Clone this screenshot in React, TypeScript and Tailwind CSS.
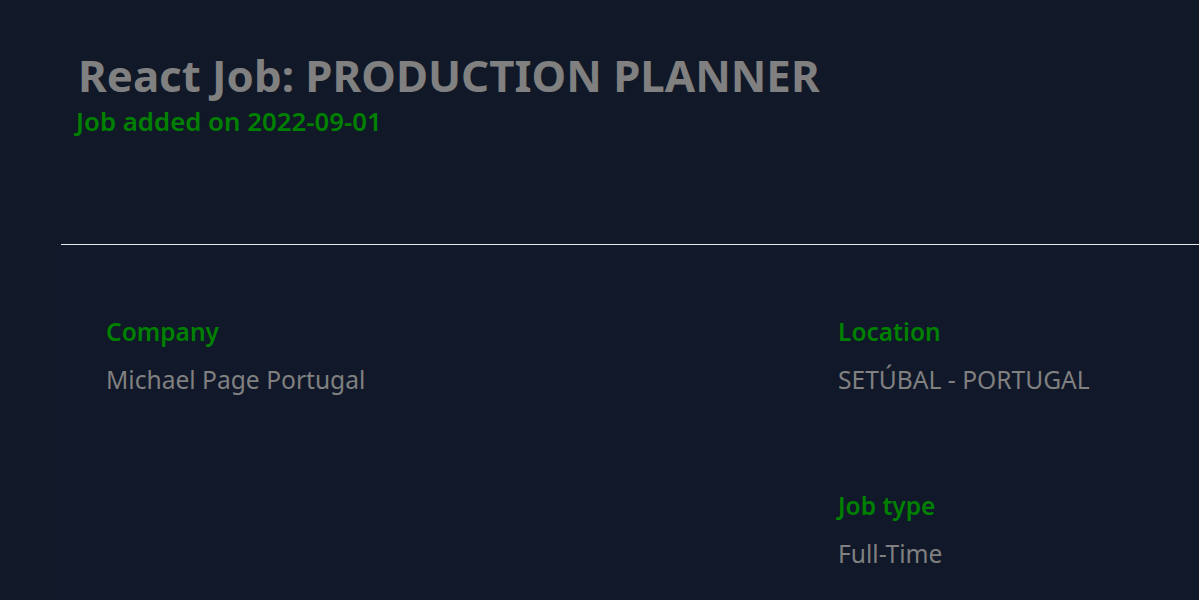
import React from 'react';

const job = {
  title: 'PRODUCTION PLANNER',
  added: '2022-09-01',
  company: 'Michael Page Portugal',
  location: 'SETÚBAL - PORTUGAL',
  type: 'Full-Time',
};

const Field: React.FC<{ label: string; value: string }> = ({ label, value }) => (
  <div className="flex flex-col">
    <h3 className="text-[24.5px] leading-[32px] font-semibold text-[#008000]">{label}</h3>
    <p className="mt-[16px] text-[24.6px] leading-[32px] text-[#808080]">{value}</p>
  </div>
);

export default function App() {
  return (
    <div
      className="min-h-[600px] bg-[#111827] pl-[61px] overflow-hidden"
      style={{ fontFamily: '"Noto Sans", "Open Sans", sans-serif' }}
    >
      {/* cabeçalho */}
      <div className="pl-[17px] pt-[49px] h-[244px]">
        <h1 className="text-[43.8px] leading-[52px] font-bold text-[#808080] whitespace-nowrap">
          React Job: {job.title}
        </h1>
        <h2 className="mt-[4px] -ml-[2px] text-[25.8px] leading-[32px] font-semibold text-[#008000]">
          Job added on {job.added}
        </h2>
      </div>

      <hr className="border-0 h-px bg-[#e5e7eb]" />

      {/* detalhes */}
      <div className="bg-[#10182a] min-h-[355px] pl-[45px] pt-[71px] flex">
        <div className="w-[732px]">
          <Field label="Company" value={job.company} />
        </div>
        <div className="flex flex-col gap-[94px]">
          <Field label="Location" value={job.location} />
          <Field label="Job type" value={job.type} />
        </div>
      </div>
    </div>
  );
}
